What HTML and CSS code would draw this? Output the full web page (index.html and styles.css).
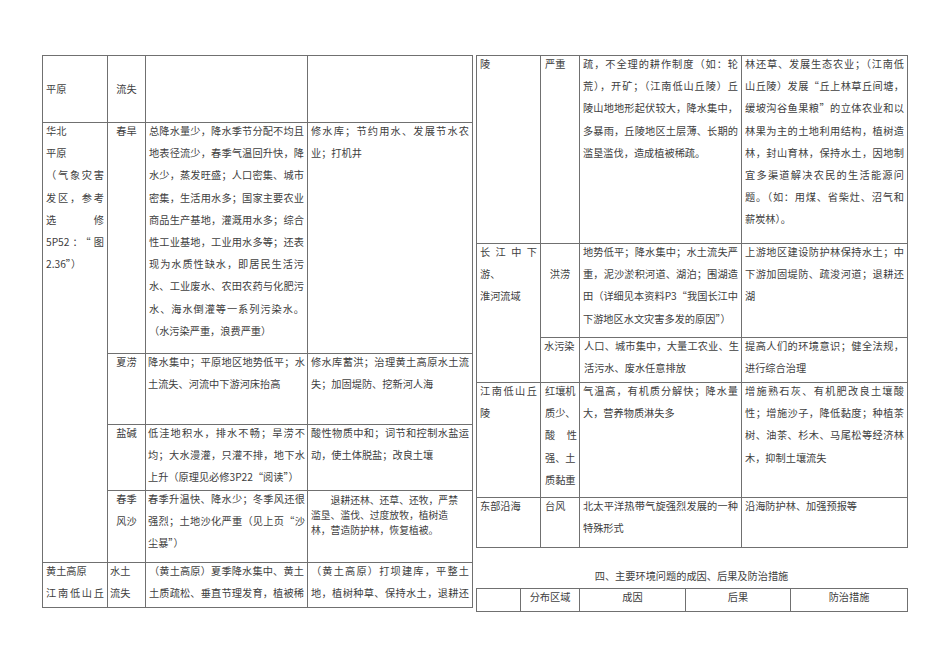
FILE: index.html
```html
<!DOCTYPE html>
<html lang="zh-CN">
<head>
<meta charset="utf-8">
<title>主要环境问题</title>
<link rel="stylesheet" href="styles.css">
</head>
<body>
<div class="page">
  <table class="tbl left">
    <colgroup><col class="c1"><col class="c2"><col class="c3"><col class="c4"></colgroup>
    <tr class="h67">
      <td class="mid"><div class="ln">平原</div></td>
      <td class="mid ctr"><div class="ln">流失</div></td>
      <td></td>
      <td></td>
    </tr>
    <tr class="h231">
      <td rowspan="4">
        <div class="ln">华北</div>
        <div class="ln">平原</div>
        <div class="ln j">（气象灾害</div>
        <div class="ln j">发区，参考</div>
        <div class="ln j">选修</div>
        <div class="ln j">5P52：“图</div>
        <div class="ln">2.36”）</div>
      </td>
      <td class="ctr"><div class="ln">春旱</div></td>
      <td>
        <div class="ln j">总降水量少，降水季节分配不均且</div>
        <div class="ln j">地表径流少，春季气温回升快，降</div>
        <div class="ln j">水少，蒸发旺盛；人口密集、城市</div>
        <div class="ln j">密集，生活用水多；国家主要农业</div>
        <div class="ln j">商品生产基地，灌溉用水多；综合</div>
        <div class="ln j">性工业基地，工业用水多等；还表</div>
        <div class="ln j">现为水质性缺水，即居民生活污</div>
        <div class="ln j">水、工业废水、农田农药与化肥污</div>
        <div class="ln j">水、海水倒灌等一系列污染水。</div>
        <div class="ln">（水污染严重，浪费严重）</div>
      </td>
      <td>
        <div class="ln j">修水库；节约用水、发展节水农</div>
        <div class="ln">业；打机井</div>
      </td>
    </tr>
    <tr class="h71">
      <td class="ctr"><div class="ln">夏涝</div></td>
      <td>
        <div class="ln j">降水集中；平原地区地势低平；水</div>
        <div class="ln">土流失、河流中下游河床抬高</div>
      </td>
      <td>
        <div class="ln j">修水库蓄洪；治理黄土高原水土流</div>
        <div class="ln">失；加固堤防、挖新河人海</div>
      </td>
    </tr>
    <tr class="h66">
      <td class="ctr"><div class="ln">盐碱</div></td>
      <td>
        <div class="ln j">低洼地积水，排水不畅；旱涝不</div>
        <div class="ln j">均；大水漫灌，只灌不排，地下水</div>
        <div class="ln">上升（原理见必修3P22“阅读”）</div>
      </td>
      <td>
        <div class="ln j">酸性物质中和；词节和控制水盐运</div>
        <div class="ln">动，使土体脱盐；改良土壤</div>
      </td>
    </tr>
    <tr class="h72">
      <td class="ctr">
        <div class="ln">春季</div>
        <div class="ln">风沙</div>
      </td>
      <td>
        <div class="ln j">春季升温快、降水少；冬季风还很</div>
        <div class="ln j">强烈；土地沙化严重（见上页“沙</div>
        <div class="ln">尘暴”）</div>
      </td>
      <td class="tight">
        <div class="tl indent">退耕还林、还草、还牧，严禁</div>
        <div class="tl">滥垦、滥伐、过度放牧，植树造</div>
        <div class="tl">林，营造防护林，恢复植被。</div>
      </td>
    </tr>
    <tr class="h45">
      <td>
        <div class="ln">黄土高原</div>
        <div class="ln j">江南低山丘</div>
      </td>
      <td class="lft">
        <div class="ln">水土</div>
        <div class="ln">流失</div>
      </td>
      <td>
        <div class="ln j">（黄土高原）夏季降水集中、黄土</div>
        <div class="ln j">土质疏松、垂直节理发育，植被稀</div>
      </td>
      <td>
        <div class="ln j">（黄土高原）打坝建库，平整土</div>
        <div class="ln j">地，植树种草、保持水土，退耕还</div>
      </td>
    </tr>
  </table>

  <div class="right">
    <table class="tbl rtbl">
      <colgroup><col class="r1"><col class="r2"><col class="r3"><col class="r4"></colgroup>
      <tr class="h188">
        <td><div class="ln">陵</div></td>
        <td><div class="ln">严重</div></td>
        <td>
          <div class="ln j">疏，不全理的耕作制度（如：轮</div>
          <div class="ln j">荒），开矿；（江南低山丘陵）丘</div>
          <div class="ln j">陵山地地形起伏较大，降水集中，</div>
          <div class="ln j">多暴雨，丘陵地区土层薄、长期的</div>
          <div class="ln">滥垦滥伐，造成植被稀疏。</div>
        </td>
        <td>
          <div class="ln j">林还草、发展生态农业；（江南低</div>
          <div class="ln j">山丘陵）发展“丘上林草丘间塘，</div>
          <div class="ln j">缓坡沟谷鱼果粮”的立体农业和以</div>
          <div class="ln j">林果为主的土地利用结构，植树造</div>
          <div class="ln j">林，封山育林，保持水土，因地制</div>
          <div class="ln j">宜多渠道解决农民的生活能源问</div>
          <div class="ln j">题。（如：用煤、省柴灶、沼气和</div>
          <div class="ln">薪炭林）。</div>
        </td>
      </tr>
      <tr class="h94">
        <td rowspan="2">
          <div class="ln j">长江中下</div>
          <div class="ln">游、</div>
          <div class="ln">淮河流域</div>
        </td>
        <td class="ctr"><div class="ln second">洪涝</div></td>
        <td>
          <div class="ln j">地势低平；降水集中；水土流失严</div>
          <div class="ln j">重，泥沙淤积河道、湖泊；围湖造</div>
          <div class="ln j">田（详细见本资料P3“我国长江中</div>
          <div class="ln">下游地区水文灾害多发的原因”）</div>
        </td>
        <td>
          <div class="ln j">上游地区建设防护林保持水土；中</div>
          <div class="ln j">下游加固堤防、疏浚河道；退耕还</div>
          <div class="ln">湖</div>
        </td>
      </tr>
      <tr class="h45">
        <td><div class="ln">水污染</div></td>
        <td>
          <div class="ln j">人口、城市集中，大量工农业、生</div>
          <div class="ln">活污水、废水任意排放</div>
        </td>
        <td>
          <div class="ln j">提高人们的环境意识；健全法规，</div>
          <div class="ln">进行综合治理</div>
        </td>
      </tr>
      <tr class="h115">
        <td>
          <div class="ln j">江南低山丘</div>
          <div class="ln">陵</div>
        </td>
        <td>
          <div class="ln">红壤机</div>
          <div class="ln">质少、</div>
          <div class="ln j">酸性</div>
          <div class="ln">强、土</div>
          <div class="ln">质黏重</div>
        </td>
        <td>
          <div class="ln j">气温高，有机质分解快；降水量</div>
          <div class="ln">大，营养物质淋失多</div>
        </td>
        <td>
          <div class="ln j">增施熟石灰、有机肥改良土壤酸</div>
          <div class="ln j">性；增施沙子，降低黏度；种植茶</div>
          <div class="ln j">树、油茶、杉木、马尾松等经济林</div>
          <div class="ln">木，抑制土壤流失</div>
        </td>
      </tr>
      <tr class="h50">
        <td><div class="ln">东部沿海</div></td>
        <td><div class="ln">台风</div></td>
        <td>
          <div class="ln j">北太平洋热带气旋强烈发展的一种</div>
          <div class="ln">特殊形式</div>
        </td>
        <td><div class="ln">沿海防护林、加强预报等</div></td>
      </tr>
    </table>

    <div class="caption">四、主要环境问题的成因、后果及防治措施</div>

    <table class="tbl btbl">
      <colgroup><col class="b1"><col class="b2"><col class="b3"><col class="b4"><col class="b5"></colgroup>
      <tr class="h23">
        <td></td>
        <td class="ctr"><div class="ln">分布区域</div></td>
        <td class="ctr"><div class="ln">成因</div></td>
        <td class="ctr"><div class="ln">后果</div></td>
        <td class="ctr"><div class="ln">防治措施</div></td>
      </tr>
    </table>
  </div>
</div>
</body>
</html>
```

FILE: styles.css
```css
html, body {
  margin: 0;
  background: #ffffff;
}

body {
  font-family: "Noto Sans CJK SC", "Noto Sans CJK JP", sans-serif;
  font-size: 10.2px;
  color: #404040;
}

.page {
  display: flex;
  align-items: flex-start;
  gap: 3px;
  padding: 55px 0 0 42px;
}

.tbl {
  border-collapse: collapse;
  table-layout: fixed;
}

.tbl td {
  border: 1px solid #707070;
  padding: 0 3px;
  vertical-align: top;
}

.tbl td.mid {
  vertical-align: middle;
}

.ctr {
  text-align: center;
}

.ln {
  line-height: 16px;
  margin-bottom: 6.2px;
  text-align: left;
}

.ctr .ln {
  text-align: center;
}

.ln:last-child {
  margin-bottom: 0;
}

.ln.j {
  text-align: justify;
  text-align-last: justify;
}

.ln.second {
  margin-top: 22px;
}

.tight {
  padding-top: 2px !important;
}

.tl {
  font-size: 9.8px;
  line-height: 15px;
}

.indent {
  text-indent: 2em;
}

/* left table */
.left {
  width: 430px;
}

.c1 { width: 65px; }
.c2 { width: 38px; }
.c3 { width: 162px; }
.c4 { width: 165px; }

.left td:nth-child(2) {
  padding: 0 2px;
}

.h67 { height: 67px; }
.h231 { height: 231px; }
.h71 { height: 71px; }
.h66 { height: 66px; }
.h72 { height: 72px; }
.h45 { height: 45px; }
.h188 { height: 188px; }
.h94 { height: 94px; }
.h115 { height: 115px; }
.h50 { height: 50px; }
.h23 { height: 23px; }

/* right column */
.right {
  width: 431px;
  display: flex;
  flex-direction: column;
}

.rtbl, .btbl {
  width: 431px;
}

.r1 { width: 64px; }
.r2 { width: 39px; }
.r3 { width: 162px; }
.r4 { width: 166px; }

.rtbl td:nth-child(2) {
  padding: 0 2px 0 4px;
}

.rtbl td.ctr:nth-child(2) {
  padding: 0 2px;
}

.caption {
  margin: 20px 0 4px;
  line-height: 16px;
  text-align: center;
}

.b1 { width: 44px; }
.b2 { width: 59px; }
.b3 { width: 106px; }
.b4 { width: 105px; }
.b5 { width: 117px; }
```
